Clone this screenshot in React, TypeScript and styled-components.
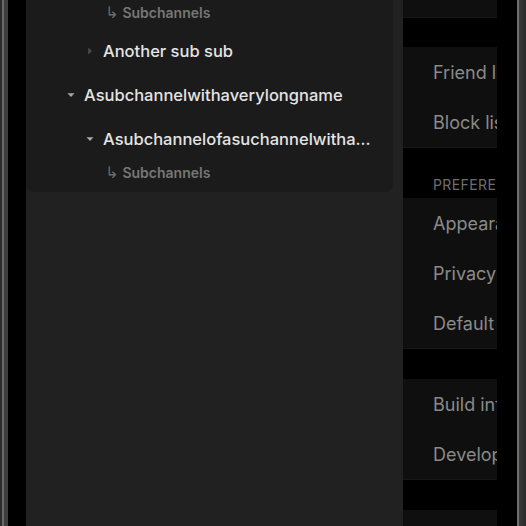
import React from "react";
import styled, {createGlobalStyle} from "styled-components";

const GlobalStyle = createGlobalStyle`
    html, body {
        margin: 0;
        padding: 0;
        background: #000;
        overflow: hidden;
    }
    body {
        font-family: Inter, "Noto Sans", "Liberation Sans", sans-serif;
        -webkit-font-smoothing: antialiased;
    }
`;

type TreeItem = {
    kind: "channel" | "sub";
    depth: number;
    label: string;
    open?: boolean;
    gapAfter?: number;
};

const treeItems: TreeItem[] = [
    {kind: "sub", depth: 1, label: "Subchannels", gapAfter: 5},
    {kind: "channel", depth: 1, label: "Another sub sub", open: false},
    {kind: "channel", depth: 0, label: "Asubchannelwithaverylongname", open: true},
    {kind: "channel", depth: 1, label: "Asubchannelofasuchannelwithalongname", open: true},
    {kind: "sub", depth: 1, label: "Subchannels"},
];

type SettingsSection = {
    header?: string;
    gap: number;
    rows: string[];
    height?: number;
};

const sections: SettingsSection[] = [
    {gap: 0, rows: [], height: 17},
    {gap: 29, rows: ["Friend list", "Block list"]},
    {gap: 50, header: "PREFERENCES", rows: ["Appearance", "Privacy", "Default"]},
    {gap: 30, rows: ["Build info", "Developer"]},
    {gap: 30, rows: [""]},
];

const Caret: React.FC<{open?: boolean}> = ({open}) => (
    <CaretBox $open={open}>
        <svg width="8" height="8" viewBox="0 0 8 8">
            {open
                ? <path d="M0.5 2.2 L7.5 2.2 L4 6 Z" fill="currentColor"/>
                : <path d="M2.2 0.5 L6 4 L2.2 7.5 Z" fill="currentColor"/>}
        </svg>
    </CaretBox>
);

const App: React.FC = () => {
    return <Phone>
        <GlobalStyle/>
        <LeftBezel/>
        <Screen>
            <Sidebar>
                <TreeCard>
                    {treeItems.map((item, i) => item.kind === "sub"
                        ? <SubRow key={i} $depth={item.depth} $gapAfter={item.gapAfter ?? 0}>
                            <SubArrow>↳</SubArrow>
                            <span>{item.label}</span>
                        </SubRow>
                        : <ChannelRow key={i} $depth={item.depth}>
                            <Caret open={item.open}/>
                            <ChannelName>{item.label}</ChannelName>
                        </ChannelRow>)}
                </TreeCard>
            </Sidebar>
            <SettingsPane>
                {sections.map((s, i) => <React.Fragment key={i}>
                    <SectionGap $height={s.gap}>
                        {s.header && <SectionHeader>{s.header}</SectionHeader>}
                    </SectionGap>
                    <Group $height={s.height}>
                        {s.rows.map((r, j) => <SettingsRow key={j}>{r}</SettingsRow>)}
                    </Group>
                </React.Fragment>)}
            </SettingsPane>
            <RightGutter/>
        </Screen>
        <RightBezel/>
    </Phone>
}

const Phone = styled.div`
    display: flex;
    width: 526px;
    height: 526px;
    background: #000;
    overflow: hidden;
`;

const LeftBezel = styled.div`
    width: 8px;
    flex-shrink: 0;
    background: linear-gradient(to right, #2c2c2c 0, #2c2c2c 2px, #6a6a6a 2px, #6a6a6a 4px, #3e3e3e 4px, #3e3e3e 8px);
`;

const RightBezel = styled.div`
    width: 10px;
    flex-shrink: 0;
    background: linear-gradient(to right, #000 0, #000 1px, #6e6e6e 1px, #6e6e6e 3px, #3a3a3a 3px, #2a2a2a 10px);
`;

const Screen = styled.div`
    flex: 1;
    display: flex;
    padding-left: 18px;
    background: #000;
    overflow: hidden;
`;

const Sidebar = styled.div`
    width: 377px;
    flex-shrink: 0;
    background: #212121;
`;

const TreeCard = styled.div`
    width: 367px;
    padding: 1px 0 8px;
    background: #1b1b1b;
    border-bottom-left-radius: 8px;
    border-bottom-right-radius: 8px;
`;

const CaretBox = styled.span<{$open?: boolean}>`
    width: 17px;
    flex-shrink: 0;
    display: flex;
    align-items: center;
    color: ${p => p.$open ? "#a8a8a8" : "#4a4a4a"};
`;

const ChannelRow = styled.div<{$depth: number}>`
    height: 44px;
    display: flex;
    align-items: center;
    padding-left: ${p => 41 + p.$depth * 19}px;
    padding-right: 20px;
`;

const ChannelName = styled.span`
    font-size: 16.5px;
    font-weight: 500;
    color: #e4e4e4;
    white-space: nowrap;
    overflow: hidden;
    text-overflow: ellipsis;
    min-width: 0;
`;

const SubRow = styled.div<{$depth: number; $gapAfter: number}>`
    height: 23px;
    margin-bottom: ${p => p.$gapAfter}px;
    display: flex;
    align-items: center;
    gap: 4px;
    padding-left: ${p => 60 + p.$depth * 19}px;
    font-size: 14px;
    font-weight: 600;
    color: #777777;
`;

const SubArrow = styled.span`
    font-family: "DejaVu Sans", sans-serif;
    font-size: 16px;
    line-height: 1;
    font-weight: 400;
    color: #6c6c6c;
`;

const SettingsPane = styled.div`
    width: 94px;
    flex-shrink: 0;
    overflow: hidden;
    background: #000;
`;

const SectionGap = styled.div<{$height: number}>`
    height: ${p => p.$height}px;
    display: flex;
    align-items: flex-end;
    padding-left: 30px;
`;

const SectionHeader = styled.div`
    font-size: 14px;
    color: #6e6e6e;
    letter-spacing: 0.4px;
    white-space: nowrap;
    margin-bottom: 5px;
`;

const Group = styled.div<{$height?: number}>`
    background: #0f0f0f;
    border-bottom: 1px solid #171717;
    ${p => p.$height !== undefined ? `height: ${p.$height}px;` : ""}
`;

const SettingsRow = styled.div`
    height: 50px;
    display: flex;
    align-items: center;
    padding-left: 30px;
    font-size: 18px;
    color: #8a8a8a;
    white-space: nowrap;
`;

const RightGutter = styled.div`
    flex: 1;
    background: #000;
`;

export default App;
